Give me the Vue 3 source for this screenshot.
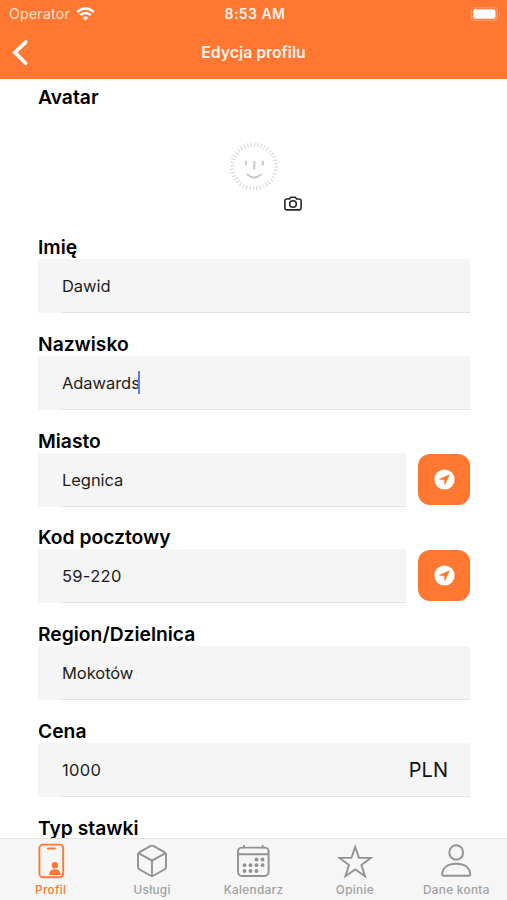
<script setup>
const fields = [
  { label: 'Imię', value: 'Dawid' },
  { label: 'Nazwisko', value: 'Adawards', caret: true },
  { label: 'Miasto', value: 'Legnica', locate: true },
  { label: 'Kod pocztowy', value: '59-220', locate: true, numeric: true },
  { label: 'Region/Dzielnica', value: 'Mokotów' },
  { label: 'Cena', value: '1000', unit: 'PLN', numeric: true }
]
const tabs = ['Profil', 'Usługi', 'Kalendarz', 'Opinie', 'Dane konta']
const dots = [[22.5, 17.5], [28.5, 17.5], [10.5, 23.2], [16.5, 23.2], [22.5, 23.2], [28.5, 23.2], [10.5, 29], [16.5, 29], [22.5, 29]]
</script>

<template>
  <div class="screen">
    <header class="top">
      <div class="status">
        <div class="carrier">
          <span>Operator</span>
          <svg width="19" height="14" viewBox="0 0 19 14" fill="none" stroke="#fff" stroke-width="2.5">
            <path d="M1.2 5C5.8 .4 13.2 .4 17.8 5M4.2 8.2C7.2 5.2 11.8 5.2 14.8 8.2" />
            <path d="M9.5 13.6 6.6 10.7Q9.5 8.2 12.4 10.7Z" fill="#fff" stroke="none" />
          </svg>
        </div>
        <time>8:53 AM</time>
        <div class="power">
          <svg width="31" height="14" viewBox="0 0 31 14">
            <rect x="1.2" y=".7" width="26" height="12.6" rx="3.8" fill="none" stroke="#ffa377" stroke-width="1.1" />
            <rect x="3" y="2.2" width="22.5" height="9.6" rx="2.3" fill="#fff" />
            <path d="M29 4.7Q31.5 7 29 9.3Z" fill="#ffa77c" />
          </svg>
        </div>
      </div>
      <div class="nav">
        <svg class="back" width="17" height="28" viewBox="0 0 17 28" fill="none" stroke="#fff" stroke-width="3.7" stroke-linecap="round" stroke-linejoin="miter">
          <path d="M13.7 3 3 13.600l10.700 10.600" />
        </svg>
        <h1>Edycja profilu</h1>
        <span></span>
      </div>
    </header>

    <main>
      <section class="avatar">
        <h2>Avatar</h2>
        <div class="portrait">
          <svg width="50" height="50" viewBox="0 0 50 50" fill="none" stroke="#c8c8c8">
            <circle cx="25" cy="25.500" r="21.8" stroke="#dcdcdc" stroke-width="4.6" pathLength="200" stroke-dasharray="1.700 3.300" />
            <path d="M16.800 19.700v4.600M33.800 19.700v4.600M25.300 20v8.700" stroke-width="2" />
            <path d="M18.500 33.500Q25.200 39.500 32 33.500" stroke-width="1.9" stroke-linecap="round" />
          </svg>
          <svg class="camera" width="20" height="17" viewBox="0 0 20 17" fill="none" stroke="#282828" stroke-width="1.6" stroke-linejoin="round">
            <path d="M3.4 4h3L7.7 2.2h4.6L13.6 4h3q1.5 0 1.5 1.7v7.6q0 1.6-1.5 1.6H3.4q-1.5 0-1.5-1.6V5.7Q1.9 4 3.4 4Z" />
            <circle cx="10" cy="9" r="3.3" />
          </svg>
        </div>
      </section>

      <section v-for="field in fields" :key="field.label" class="field">
        <h2>{{ field.label }}</h2>
        <div class="row">
          <div class="box">
            <span class="value" :class="{ numeric: field.numeric }">{{ field.value }}</span>
            <i v-if="field.caret" class="caret"></i>
            <span v-if="field.unit" class="unit">{{ field.unit }}</span>
          </div>
          <button v-if="field.locate" aria-label="Lokalizacja">
            <svg width="21" height="21" viewBox="0 0 21 21">
              <circle cx="10.5" cy="10.5" r="10.1" fill="#fff" />
              <path d="m15.9 5.3-4.7 10.1q-.7 1-.9-.2v-4.5H5.8q-1.2-.2-.2-.9Z" fill="#ff7730" />
            </svg>
          </button>
        </div>
      </section>
      <section class="last"><h2>Typ stawki</h2></section>
    </main>

    <nav class="tabs">
      <div v-for="(tab, i) in tabs" :key="tab" class="tab" :class="{ active: i === 0 }">
        <svg width="38" height="38" viewBox="0 0 38 38" fill="none" stroke="currentColor" stroke-width="1.9" stroke-linejoin="round" stroke-linecap="round">
          <template v-if="i === 0">
            <rect x="7.4" y="2.6" width="23.8" height="32.6" rx="3.6" />
            <path d="M15.8 6.6h7" stroke-width="2" />
            <circle cx="22.9" cy="23.2" r="3.2" fill="currentColor" stroke="none" />
            <path d="M17.1 33q0-5.7 5.8-5.7t5.8 5.7Z" fill="currentColor" stroke="none" />
          </template>
          <template v-else-if="i === 1">
            <path d="M17.3 4.1q1.7-.9 3.4 0l10.7 6q1.6.9 1.6 2.7v12q0 1.8-1.6 2.7l-10.7 6q-1.7.9-3.4 0l-10.7-6Q5 26.6 5 24.8v-12q0-1.8 1.6-2.7ZM5.5 11.2 19 18.7l13.5-7.5M19 18.7v15" />
          </template>
          <template v-else-if="i === 2">
            <rect x="4" y="5.6" width="30.6" height="28.4" rx="4" />
            <path d="M4.3 12.300h30M10 3.700v1.800M28.600 3.700v1.800" />
            <circle v-for="(dot, d) in dots" :key="d" :cx="dot[0]" :cy="dot[1]" r="1.9" fill="currentColor" stroke="none" />
          </template>
          <path v-else-if="i === 3" stroke-linejoin="miter" d="m19.200 5 3.800 10.900h11.800L25.400 23 29 34.200 19.200 27.500 9.400 34.200l3.600-11.200-9.400-7.100h11.800Z" />
          <template v-else>
            <ellipse cx="19.2" cy="10.5" rx="6.9" ry="7.2" />
            <path d="M5.100 32C5.800 25.400 11.400 21.700 19.200 21.700S32.600 25.400 33.300 32Q33.300 33.700 31.500 33.700H6.900Q5.100 33.700 5.100 32Z" />
          </template>
        </svg>
        <span>{{ tab }}</span>
      </div>
    </nav>
  </div>
</template>

<style>
body { margin: 0; overflow: hidden; }
</style>

<style scoped>
.screen {
  width: 507px;
  height: 900px;
  display: flex;
  flex-direction: column;
  background: #fff;
  font-family: Inter, "Liberation Sans", sans-serif;
  color: #000;
  overflow: hidden;
}
svg { display: block; flex: none; }
.top { height: 79px; flex: none; background: #ff7730; color: #fff4ec; }
.status {
  height: 27px;
  display: grid;
  grid-template-columns: 1fr auto 1fr;
  align-items: center;
  padding: 0 6px 0 9px;
}
.carrier { display: flex; align-items: center; gap: 6px; font-size: 14px; letter-spacing: .3px; color: #ffe1d0; }
time { font-size: 14px; font-weight: 600; letter-spacing: .45px; }
.power { display: flex; justify-content: flex-end; }
.nav { height: 51px; display: grid; grid-template-columns: 1fr auto 1fr; align-items: center; padding: 0 12px; }
h1 { margin: 0; font-size: 15.8px; line-height: 20px; font-weight: 600; letter-spacing: 0; }
main { flex: 1; min-height: 0; padding: 6px 37px 0 38px; }
h2 {
  margin: 0;
  height: 24px;
  font-size: 19.3px;
  line-height: 24px;
  font-weight: 600;
  letter-spacing: 0;
  white-space: nowrap;
}
.avatar { height: 149.8px; }
.portrait { display: grid; width: 74px; margin: 32px 0 0 191px; }
.camera { justify-self: end; margin-top: 4px; }
.field { height: 96.9px; }
.last { height: 21px; }
.last h2 { height: 21px; }
.row { display: flex; gap: 12px; }
.box {
  flex: 1;
  height: 54px;
  display: flex;
  align-items: center;
  padding: 0 22px 0 24px;
  background: linear-gradient(#e2e2e2, #e2e2e2) 24px 100% / 100% 1px no-repeat, #f5f5f5;
  box-sizing: border-box;
}
.value { font-size: 16.5px; letter-spacing: -.06px; color: #1d1d1d; }
.value.numeric { letter-spacing: .3px; }
.caret { width: 2px; height: 23px; margin-left: -2px; background: #5b7fe8; }
.unit { margin-left: auto; font-size: 20px; color: #111; }
button {
  width: 52px;
  height: 51px;
  margin-top: 1px;
  padding: 0;
  border: 0;
  border-radius: 12px;
  background: #ff7730;
  display: grid;
  place-items: center;
}
.tabs {
  height: 62px;
  flex: none;
  box-sizing: border-box;
  display: grid;
  grid-template-columns: repeat(5, 1fr);
  border-top: 1px solid #e5e5e5;
  background: #f6f6f6;
  color: #929292;
}
.tab { display: flex; flex-direction: column; align-items: center; padding-top: 3px; }
.tab span { font-size: 11.8px; line-height: 16px; margin-top: 2px; font-weight: 500; letter-spacing: .3px; white-space: nowrap; color: #a0a0a0; }
.tab.active, .tab.active span { color: #ff7730; }
</style>
